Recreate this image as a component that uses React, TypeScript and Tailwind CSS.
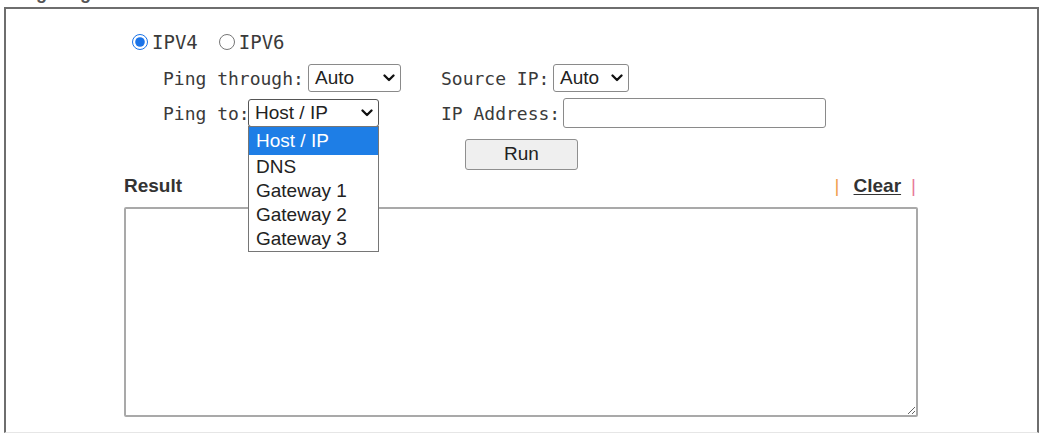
import { useState } from 'react';

const mono = { fontFamily: '"DejaVu Sans Mono", monospace' };
const sans = { fontFamily: '"Liberation Sans", Arial, sans-serif' };

function Chevron() {
  return (
    <svg width="12" height="8" viewBox="0 0 12 8" className="shrink-0">
      <path d="M1.5 1.5 L6 6 L10.5 1.5" fill="none" stroke="#111" strokeWidth="2.3" strokeLinecap="round" strokeLinejoin="round" />
    </svg>
  );
}

// Plain box that looks like a closed <select>
function SelectBox({ value, width, open }: { value: string; width: string; open?: boolean }) {
  return (
    <div
      className={`${width} shrink-0 h-[28px] flex items-center justify-between pl-[6px] pr-[5px] bg-white rounded-[3px] border ${
        open ? 'border-[#555]' : 'border-[#8a8a8a]'
      } text-[19px] text-[#222] whitespace-nowrap`}
      style={sans}
    >
      <span>{value}</span>
      <Chevron />
    </div>
  );
}

const pingTargets = ['Host / IP', 'DNS', 'Gateway 1', 'Gateway 2', 'Gateway 3'];

export default function App() {
  const [ipVersion, setIpVersion] = useState<'v4' | 'v6'>('v4');
  const [address, setAddress] = useState('');
  const [result, setResult] = useState('');

  return (
    <div className="w-[1040px] h-[434px] bg-white overflow-hidden">
      {/* section title, mostly scrolled off above */}
      <div className="h-[7px] overflow-hidden">
        <div className="-mt-[20px] pl-[8px] text-[18px] font-bold text-[#555]" style={sans}>
          Ping Diagnosis
        </div>
      </div>

      <div className="ml-[4px] w-[1035px] h-[426px] border-[2px] border-b border-[#6e6e6e] border-b-[#e6e6e6]">
        {/* IP version */}
        <div className="flex items-center pl-[126px] pt-[24px] h-[42px] text-[19px] text-[#3a3a3a] whitespace-nowrap" style={mono}>
          <label className="flex items-center">
            <input
              type="radio"
              checked={ipVersion === 'v4'}
              onChange={() => setIpVersion('v4')}
              className="w-[16px] h-[16px] m-0 accent-[#1a73e8]"
            />
            <span className="ml-[4px]">IPV4</span>
          </label>
          <label className="flex items-center ml-[21px]">
            <input
              type="radio"
              checked={ipVersion === 'v6'}
              onChange={() => setIpVersion('v6')}
              className="w-[16px] h-[16px] m-0 accent-[#1a73e8]"
            />
            <span className="ml-[4px]">IPV6</span>
          </label>
        </div>

        <div
          className="grid grid-cols-[278px_1fr] pl-[157px] mt-[13px] gap-y-[6px] text-[18px] text-[#3a3a3a] whitespace-nowrap"
          style={mono}
        >
          <div className="flex items-center">
            <span className="w-[145px] shrink-0">Ping through:</span>
            <SelectBox value="Auto" width="w-[93px]" />
          </div>
          <div className="flex items-center">
            <span className="w-[112px] shrink-0">Source IP:</span>
            <SelectBox value="Auto" width="w-[76px]" />
          </div>

          <div className="flex items-center h-[30px]">
            <span className="w-[85px] shrink-0">Ping to:</span>
            <div className="relative">
              <SelectBox value="Host / IP" width="w-[131px]" open />
              {/* opened option list */}
              <ul
                className="absolute left-0 top-[27px] w-[131px] bg-white border border-[#767676] text-[19px] text-[#222] z-10"
                style={sans}
              >
                {pingTargets.map((t, i) => (
                  <li
                    key={t}
                    className={`px-[7px] ${
                      i === 0 ? 'bg-[#1e7ee6] text-white h-[28px] leading-[28px]' : 'h-[24px] leading-[24px]'
                    }`}
                  >
                    {t}
                  </li>
                ))}
              </ul>
            </div>
          </div>
          <div className="flex items-center">
            <span className="w-[122px] shrink-0">IP Address:</span>
            <input
              value={address}
              onChange={e => setAddress(e.target.value)}
              className="w-[263px] shrink-0 h-[30px] border border-[#8a8a8a] rounded-[3px] bg-white outline-none px-1 text-[18px]"
              style={sans}
            />
          </div>

          <div />
          <div className="pl-[24px] pt-[5px]">
            <button
              onClick={() => setResult(address ? `Pinging ${address} ...` : '')}
              className="w-[113px] h-[31px] bg-[#efefef] border border-[#8f8f8f] rounded-[3px] text-[19px] text-[#222]"
              style={sans}
            >
              Run
            </button>
          </div>
        </div>

        {/* Result */}
        <div className="ml-[118px] w-[794px] mt-[8px]">
          <div className="flex items-end justify-between h-[22px] text-[19px]" style={sans}>
            <span className="font-bold text-[#333]">Result</span>
            <div className="flex items-center pr-[2px]">
              <span className="text-[#f0a050]">|</span>
              <button
                onClick={() => setResult('')}
                className="ml-[14px] mr-[10px] font-bold text-[#333] underline underline-offset-2"
              >
                Clear
              </button>
              <span className="text-[#e87a9a]">|</span>
            </div>
          </div>
          <textarea
            value={result}
            onChange={e => setResult(e.target.value)}
            className="block mt-[7px] w-[794px] h-[210px] border-[2px] border-[#a9a9a9] rounded-[2px] bg-white outline-none resize"
            style={mono}
          />
        </div>
      </div>
    </div>
  );
}
